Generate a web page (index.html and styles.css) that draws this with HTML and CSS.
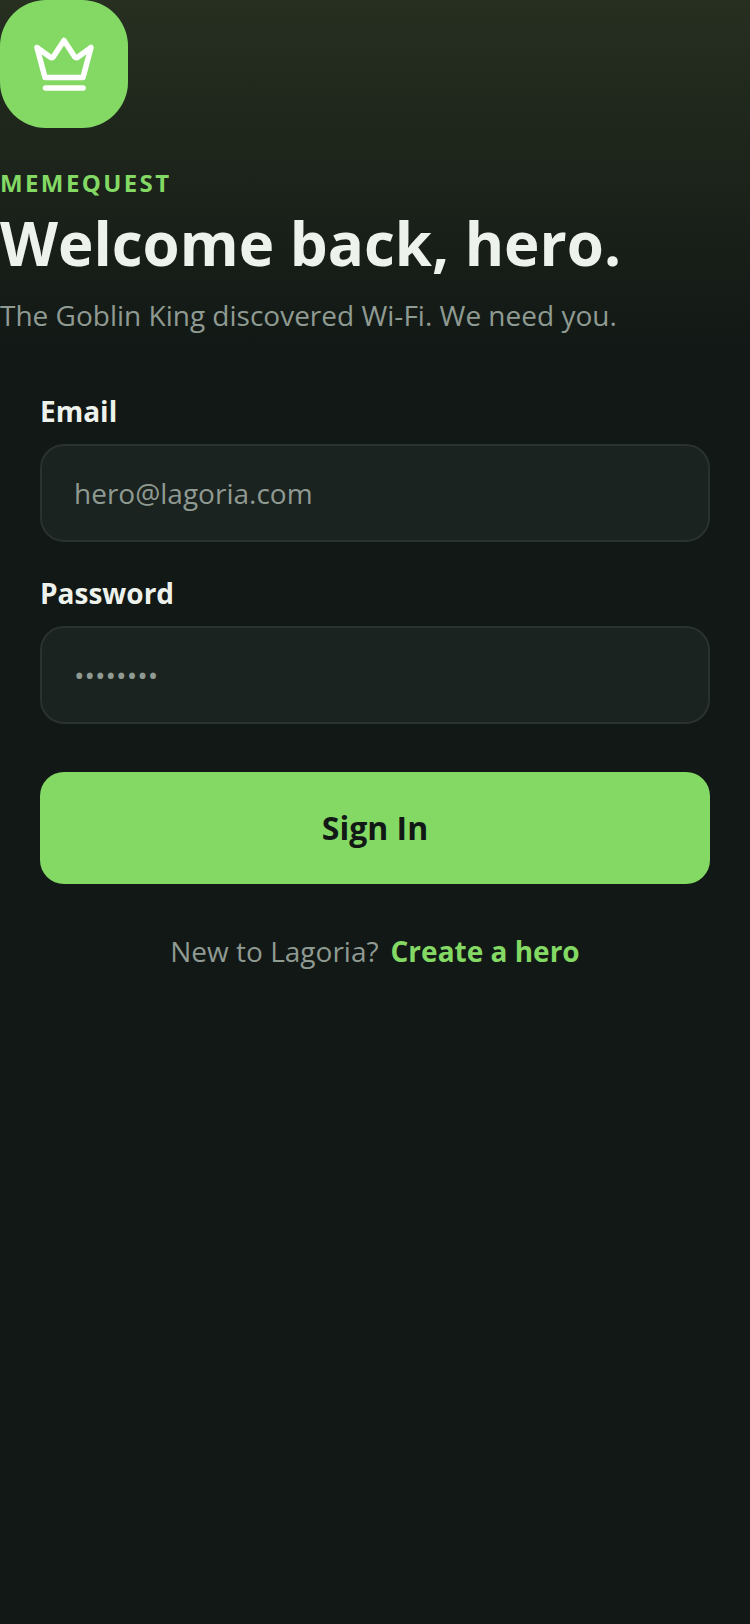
FILE: index.html
```html
<!DOCTYPE html>
<html lang="en">

<head>
  <meta charset="UTF-8">
  <meta name="viewport" content="width=device-width, initial-scale=1.0">
  <title>MemeQuest - Sign In</title>
  <link rel="stylesheet" href="styles.css">
</head>

<body>
  <div class="hero">
    <div class="logo">
      <svg class="crown" width="64" height="64" viewBox="0 0 64 64" fill="none" stroke="#fff" stroke-width="5.500" stroke-linecap="round" stroke-linejoin="round">
        <path d="M5 15.500L18 25Q20 26.500 21.500 24.500L32 8.500L42.500 24.500Q44 26.500 46 25L59 15.500L51 45.500H13Z" />
        <path d="M13.500 56H51" />
      </svg>
    </div>
    <p class="brand">MEMEQUEST</p>
    <h1 class="title">Welcome back, hero.</h1>
    <p class="tagline">The Goblin King discovered Wi-Fi. We need you.</p>
  </div>
  <form class="form">
    <label class="label" for="email">Email</label>
    <input class="field" id="email" type="email" placeholder="hero@lagoria.com">
    <label class="label" for="password">Password</label>
    <input class="field field-password" id="password" type="text" placeholder="••••••••">
    <button class="submit" type="button">Sign In</button>
    <p class="signup">
      <span>New to Lagoria?</span>
      <a class="signup-link" href="#">Create a hero</a>
    </p>
  </form>
</body>

</html>
```

FILE: styles.css
```css
* {
  box-sizing: border-box;
}

body {
  margin: 0;
  min-height: 1624px;
  background: #121815;
  color: #eef2ec;
  font-family: "Open Sans", "Liberation Sans", sans-serif;
}

.hero {
  height: 350px;
  background: linear-gradient(180deg, #262f20 0%, #121815 100%);
}

.logo {
  width: 128px;
  height: 128px;
  border-radius: 46px;
  background: #83d964;
  display: flex;
  align-items: center;
  justify-content: center;
}

.brand {
  margin: 39px 0 0;
  color: #83d964;
  font-size: 24px;
  line-height: 32px;
  font-weight: 700;
  letter-spacing: 2.4px;
}

.title {
  margin: 8px 0 0;
  font-size: 60px;
  line-height: 72px;
  font-weight: 700;
}

.tagline {
  margin: 16px 0 0;
  color: #8f9a92;
  font-size: 28px;
  line-height: 40px;
}

.form {
  padding: 42px 40px 0;
  display: flex;
  flex-direction: column;
}

.label {
  font-size: 28px;
  line-height: 38px;
  font-weight: 700;
  margin-bottom: 14px;
}

.field {
  height: 98px;
  margin-bottom: 32px;
  padding: 0 32px;
  background: #1b2320;
  border: 2px solid #2a322e;
  border-radius: 24px;
  outline: none;
  color: #eef2ec;
  font-family: inherit;
  font-size: 28px;
}

.field::placeholder {
  color: #8f9a92;
  opacity: 1;
}

.submit {
  height: 112px;
  margin-top: 16px;
  padding: 0 0 2px;
  border: none;
  border-radius: 24px;
  background: #83d964;
  color: #121815;
  font-family: inherit;
  font-size: 32px;
  font-weight: 700;
  cursor: pointer;
}

.signup {
  margin: 47px 0 0;
  display: flex;
  justify-content: center;
  gap: 12px;
  font-size: 28px;
  line-height: 40px;
  color: #8f9a92;
}

.signup-link {
  color: #83d964;
  font-weight: 700;
  text-decoration: none;
}
```
